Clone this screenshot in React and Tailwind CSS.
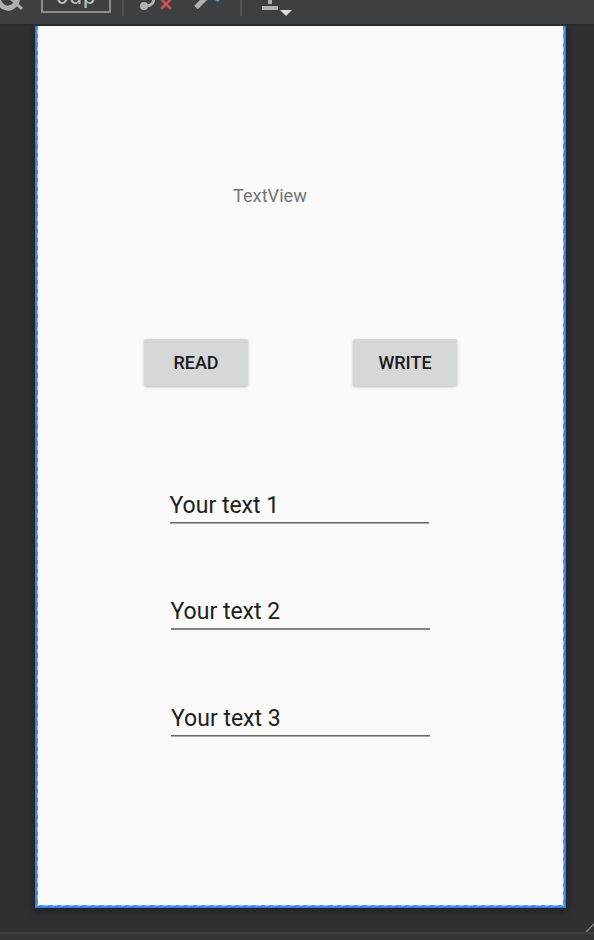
import React from "react";

function Toolbar() {
  return (
    <header className="h-[26px] shrink-0 overflow-hidden border-b-2 border-[#2a2b2c] bg-[#3d4042]">
      <div className="flex h-6 items-start">
        <svg className="h-6 w-[41px] shrink-0" viewBox="0 0 41 24" fill="none">
          <path d="M-2 -1 C0 7 7 10 12 7 C16 5 18 0 18 -5" stroke="#afb1b3" strokeWidth="5" />
          <path d="M7 -5 L22 9" stroke="#afb1b3" strokeWidth="3" />
        </svg>
        <div className="flex h-[13px] w-[70px] shrink-0 justify-center border-2 border-t-0 border-[#8a8c8e] font-['Inter',sans-serif] text-[20px] font-medium leading-[20px] tracking-[1px] text-[#b9bbbd]">
          <span className="-mt-[13px]">0dp</span>
        </div>
        <div className="ml-[11px] h-4 w-[2px] shrink-0 bg-[#515355]" />
        <svg className="h-6 w-[176px] shrink-0" viewBox="124 0 176 24" fill="none">
          <circle cx="144" cy="6" r="4" fill="#afb1b3" />
          <path d="M144 6 C151 6 154 4 154 -3" stroke="#afb1b3" strokeWidth="3" />
          <path d="M161 -1 L171 9 M171 -1 L161 9" stroke="#c75450" strokeWidth="2.7" />
          <path d="M196 7.5 L207 -3.5" stroke="#afb1b3" strokeWidth="5" />
          <path d="M215 0 h5 l-2.5 2 z" fill="#4a9fe0" />
          <path d="M241 0 V16" stroke="#515355" strokeWidth="2" />
          <path d="M268 0 h4 v4 h-4 z M262 6 h16 v4 h-16 z" fill="#afb1b3" />
          <path d="M280 10 h12 l-6 6 z" fill="#dcdcdc" />
        </svg>
      </div>
    </header>
  );
}

function ActionButton({ children }) {
  return (
    <button className="h-[47px] w-[104px] rounded-[2px] bg-[#d6d7d7] pt-px text-[18px] font-medium leading-none text-[#1b1b1b] shadow-[0_1px_3px_rgba(0,0,0,0.25)]">
      {children}
    </button>
  );
}

function Field({ value, className }) {
  return (
    <div className={`flex w-[259px] items-start ${className}`}>
      <span className="whitespace-nowrap text-[23px] leading-[30px] text-[#202020]">{value}</span>
    </div>
  );
}

export default function App() {
  return (
    <div className="flex h-[940px] w-[594px] flex-col overflow-hidden bg-[#2e3032] font-['Roboto',sans-serif]">
      <Toolbar />
      <main className="flex h-[906px] shrink-0 items-start overflow-hidden pl-[35px]">
        <div className="w-[531px] bg-[#3478ea] px-px pb-[1px] shadow-[0_2px_8px_2px_rgba(0,0,0,0.3)]">
          <div className="bg-[repeating-linear-gradient(135deg,#3b80f4_0_3px,#4f8ff4_3px_6px)] px-px pb-px">
            <div className="bg-[repeating-linear-gradient(135deg,#5593f3_0_3px,#8fb8f4_3px_6px)] px-px pb-px">
              <div className="flex h-[879px] flex-col items-start bg-[#fafafa]">
                <p className="ml-[195px] mt-[158px] text-[18.2px] leading-6 text-[#747474]">TextView</p>
                <div className="ml-[106px] mt-[131px] flex gap-[105px]">
                  <ActionButton>READ</ActionButton>
                  <ActionButton>WRITE</ActionButton>
                </div>
                <Field
                  value="Your text 1"
                  className="ml-[131.5px] mt-[105px] h-8 border-b border-[#666] shadow-[0_1px_0_#aaa]"
                />
                <Field value="Your text 2" className="ml-[132.5px] mt-[74px] h-[33px] border-b-2 border-[#828282]" />
                <Field
                  value="Your text 3"
                  className="ml-[133px] mt-[74px] h-8 border-b border-[#666] shadow-[0_1px_0_#aaa]"
                />
              </div>
            </div>
          </div>
        </div>
        <svg className="ml-[19px] h-[906px] w-[9px]" viewBox="0 0 9 906">
          <path d="M1 906 L9 898" stroke="#85878a" strokeWidth="1.5" />
        </svg>
      </main>
      <footer className="h-2 shrink-0 border-t-2 border-[#3c3e40] bg-[#333537]" />
    </div>
  );
}
